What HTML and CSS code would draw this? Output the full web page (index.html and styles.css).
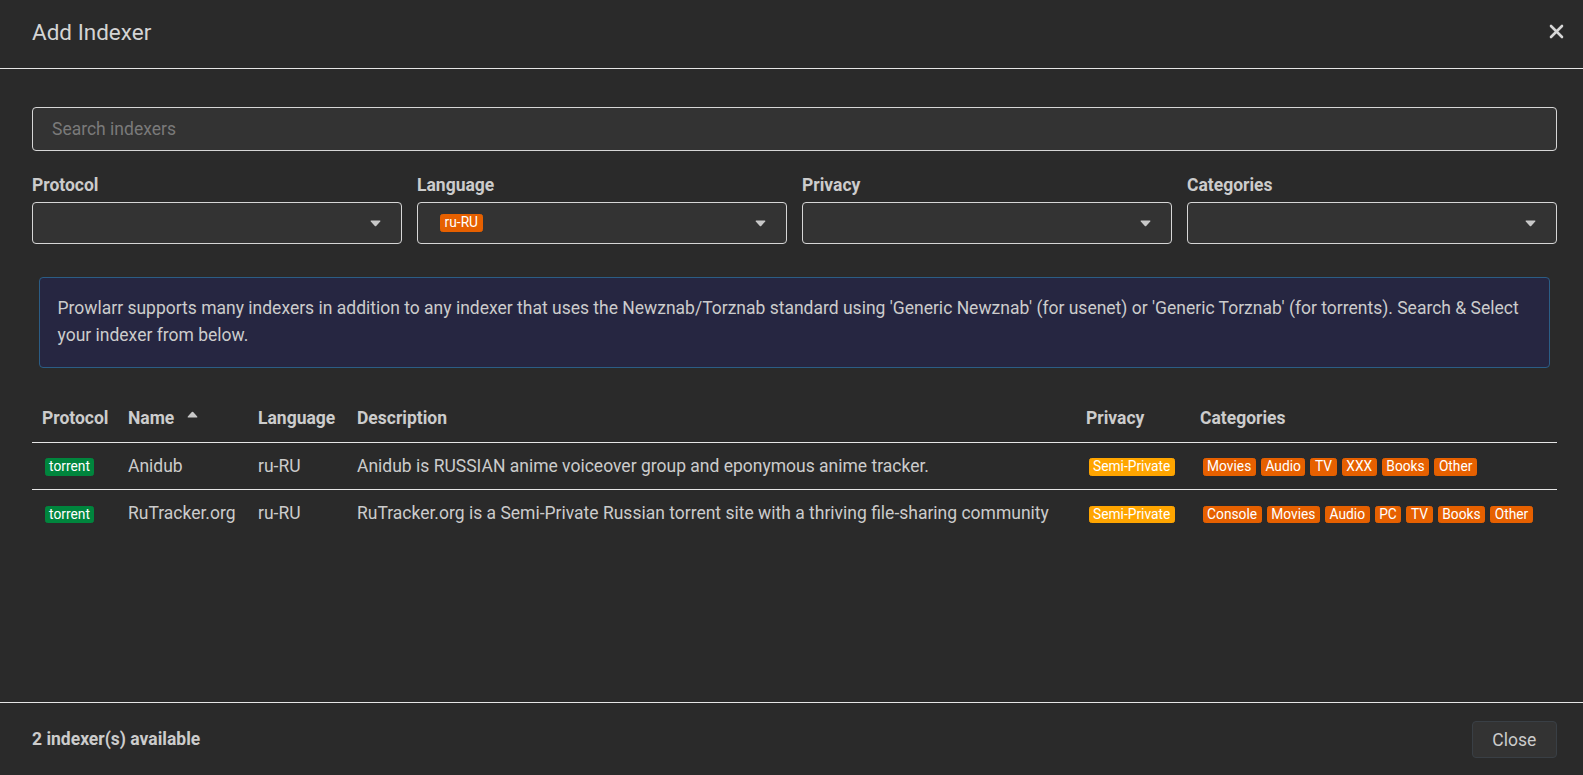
FILE: index.html
```html
<!DOCTYPE html>
<html lang="en">
<head>
<meta charset="utf-8">
<title>Add Indexer</title>
<link rel="stylesheet" href="styles.css">
</head>
<body>
<div class="modal">
  <header class="modal-header">
    <h1 class="modal-title">Add Indexer</h1>
    <button class="close-x" aria-label="Close">
      <svg width="15" height="15" viewBox="0 0 15 15"><path d="M2 2 L13 13 M13 2 L2 13" stroke="#d6d6d6" stroke-width="2.6" stroke-linecap="round" fill="none"/></svg>
    </button>
  </header>

  <main class="modal-body">
    <input class="search" type="text" placeholder="Search indexers">

    <div class="filters">
      <div class="filter">
        <label class="filter-label">Protocol</label>
        <div class="select">
          <span class="select-value"></span>
          <svg class="caret" width="11" height="7" viewBox="0 0 11 7"><path d="M1.2 0.6 H9.8 Q10.9 0.6 10.2 1.5 L6.2 6 Q5.5 6.7 4.8 6 L0.8 1.5 Q0.1 0.6 1.2 0.6 Z" fill="#c8c8c8"/></svg>
        </div>
      </div>
      <div class="filter">
        <label class="filter-label">Language</label>
        <div class="select">
          <span class="select-value"><span class="badge badge-orange">ru-RU</span></span>
          <svg class="caret" width="11" height="7" viewBox="0 0 11 7"><path d="M1.2 0.6 H9.8 Q10.9 0.6 10.2 1.5 L6.2 6 Q5.5 6.7 4.8 6 L0.8 1.5 Q0.1 0.6 1.2 0.6 Z" fill="#c8c8c8"/></svg>
        </div>
      </div>
      <div class="filter">
        <label class="filter-label">Privacy</label>
        <div class="select">
          <span class="select-value"></span>
          <svg class="caret" width="11" height="7" viewBox="0 0 11 7"><path d="M1.2 0.6 H9.8 Q10.9 0.6 10.2 1.5 L6.2 6 Q5.5 6.7 4.8 6 L0.8 1.5 Q0.1 0.6 1.2 0.6 Z" fill="#c8c8c8"/></svg>
        </div>
      </div>
      <div class="filter">
        <label class="filter-label">Categories</label>
        <div class="select">
          <span class="select-value"></span>
          <svg class="caret" width="11" height="7" viewBox="0 0 11 7"><path d="M1.2 0.6 H9.8 Q10.9 0.6 10.2 1.5 L6.2 6 Q5.5 6.7 4.8 6 L0.8 1.5 Q0.1 0.6 1.2 0.6 Z" fill="#c8c8c8"/></svg>
        </div>
      </div>
    </div>

    <div class="alert">Prowlarr supports many indexers in addition to any indexer that uses the Newznab/Torznab standard using 'Generic Newznab' (for usenet) or 'Generic Torznab' (for torrents). Search &amp; Select your indexer from below.</div>

    <table class="indexers">
      <colgroup>
        <col class="c-protocol">
        <col class="c-name">
        <col class="c-language">
        <col class="c-desc">
        <col class="c-privacy">
        <col class="c-cats">
      </colgroup>
      <thead>
        <tr>
          <th>Protocol</th>
          <th>Name<svg class="sort-caret" width="11" height="7" viewBox="0 0 11 7"><path d="M1.2 6.4 H9.8 Q10.9 6.4 10.2 5.5 L6.2 1 Q5.5 0.3 4.8 1 L0.8 5.5 Q0.1 6.4 1.2 6.4 Z" fill="#c8c8c8"/></svg></th>
          <th>Language</th>
          <th>Description</th>
          <th>Privacy</th>
          <th>Categories</th>
        </tr>
      </thead>
      <tbody>
        <tr>
          <td><span class="badge badge-green">torrent</span></td>
          <td>Anidub</td>
          <td>ru-RU</td>
          <td>Anidub is RUSSIAN anime voiceover group and eponymous anime tracker.</td>
          <td><span class="badge badge-amber">Semi-Private</span></td>
          <td><span class="badge badge-orange">Movies</span><span class="badge badge-orange">Audio</span><span class="badge badge-orange">TV</span><span class="badge badge-orange">XXX</span><span class="badge badge-orange">Books</span><span class="badge badge-orange">Other</span></td>
        </tr>
        <tr>
          <td><span class="badge badge-green">torrent</span></td>
          <td>RuTracker.org</td>
          <td>ru-RU</td>
          <td>RuTracker.org is a Semi-Private Russian torrent site with a thriving file-sharing community</td>
          <td><span class="badge badge-amber">Semi-Private</span></td>
          <td><span class="badge badge-orange">Console</span><span class="badge badge-orange">Movies</span><span class="badge badge-orange">Audio</span><span class="badge badge-orange">PC</span><span class="badge badge-orange">TV</span><span class="badge badge-orange">Books</span><span class="badge badge-orange">Other</span></td>
        </tr>
      </tbody>
    </table>
  </main>

  <footer class="modal-footer">
    <div class="count">2 indexer(s) available</div>
    <button class="btn">Close</button>
  </footer>
</div>
</body>
</html>
```

FILE: styles.css
```css
* {
  box-sizing: border-box;
}

html,
body {
  margin: 0;
  height: 100%;
}

body {
  background: #2a2a2a;
  color: #ccc;
  font-family: Roboto, "Noto Sans", "Liberation Sans", sans-serif;
  font-size: 17.5px;
  line-height: 1.52857;
}

.modal {
  height: 100vh;
  display: flex;
  flex-direction: column;
}

.modal-header {
  flex: none;
  display: flex;
  align-items: center;
  justify-content: space-between;
  height: 69px;
  padding: 0 15px 5px 32px;
  border-bottom: 1px solid #e5e5e5;
}

.modal-title {
  margin: 0;
  font-size: 22.5px;
  font-weight: 400;
  line-height: 34px;
  color: #d4d4d4;
}

.close-x {
  width: 24px;
  height: 24px;
  padding: 0;
  border: 0;
  background: transparent;
  display: flex;
  align-items: center;
  justify-content: center;
  cursor: pointer;
}

.modal-body {
  flex: 1;
  padding: 38px 26px 0 32px;
}

.search {
  display: block;
  width: 100%;
  height: 44px;
  padding: 0 19px;
  border: 1px solid #d6d6d6;
  border-radius: 4px;
  background: #333;
  color: #ccc;
  font-family: inherit;
  font-size: 17.5px;
  outline: none;
}

.search::placeholder {
  color: #7a7a7a;
}

.filters {
  display: grid;
  grid-template-columns: repeat(4, 1fr);
  column-gap: 15px;
  margin-top: 21px;
}

.filter-label {
  display: block;
  font-weight: 700;
  line-height: 26.75px;
  margin-bottom: 3px;
}

.select {
  display: flex;
  align-items: center;
  justify-content: space-between;
  height: 42.5px;
  padding: 0 20px 0 22px;
  border: 1px solid #d6d6d6;
  border-radius: 4px;
  background: #333;
}

.select-value {
  display: flex;
  align-items: center;
}

.caret {
  display: block;
}

.alert {
  margin: 32.5px 7px 0 6.5px;
  padding: 17px 18px 19px;
  border: 1px solid #2b5d85;
  border-radius: 4px;
  background: #262641;
  line-height: 26.75px;
}

.indexers {
  width: 100%;
  margin-top: 26.5px;
  border-collapse: collapse;
  table-layout: fixed;
}

.c-protocol { width: 86px; }
.c-name { width: 130px; }
.c-language { width: 99px; }
.c-desc { width: 729px; }
.c-privacy { width: 114px; }

.indexers th,
.indexers td {
  padding: 10px;
  text-align: left;
  vertical-align: middle;
  line-height: 26.75px;
  white-space: nowrap;
}

.indexers th {
  font-weight: 700;
}

.indexers tbody tr {
  border-top: 1px solid #e5e5e5;
}

.sort-caret {
  margin-left: 13px;
  vertical-align: 6px;
}

.badge {
  display: inline-block;
  margin: 0 2.5px;
  padding: 0 3.6px;
  border: 1px solid;
  border-radius: 2.5px;
  font-size: 13.75px;
  line-height: 15.5px;
  color: #fff;
  white-space: nowrap;
  vertical-align: middle;
}

.select .badge {
  margin: 0;
}

.badge-orange {
  background: #e66000;
  border-color: #e66000;
}

.badge-green {
  background: #00853d;
  border-color: #00853d;
}

.badge-amber {
  background: #ffa500;
  border-color: #ffa500;
}

.modal-footer {
  flex: none;
  display: flex;
  align-items: center;
  justify-content: space-between;
  height: 73px;
  padding: 1px 26px 0 32px;
  border-top: 1px solid #e5e5e5;
}

.count {
  font-weight: 700;
}

.btn {
  height: 37.5px;
  width: 85.5px;
  padding: 0;
  border: 1px solid #393f45;
  border-radius: 4px;
  background: #333;
  color: #ccc;
  font-family: inherit;
  font-size: 17.5px;
  cursor: pointer;
}
```
